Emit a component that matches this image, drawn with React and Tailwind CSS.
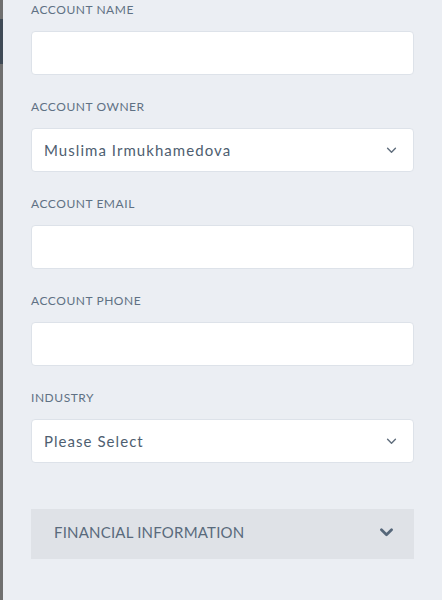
import React from "react";

const Chevron = ({ className, strokeWidth = 1.6 }) => (
  <svg viewBox="0 0 12 8" className={className} fill="none" stroke="currentColor" strokeWidth={strokeWidth} strokeLinecap="round" strokeLinejoin="round">
    <path d="M1.5 1.5 L6 6 L10.5 1.5" />
  </svg>
);

const Label = ({ children }) => (
  <div className="h-[20px] leading-[20px] text-[12px] text-[#5f7184] uppercase tracking-[0.55px]">{children}</div>
);

const Input = () => (
  <div className="mt-[11px] h-[44px] rounded-[4px] bg-white border border-[#dde2e9]" />
);

const Select = ({ value }) => (
  <div className="mt-[11px] h-[44px] rounded-[4px] bg-white border border-[#dde2e9] flex items-center justify-between pl-[12px] pr-[16px]">
    <span className="text-[15px] text-[#4e5e70] tracking-[1.05px]">{value}</span>
    <Chevron className="w-[11px] h-[7px] text-[#5f6d7c]" />
  </div>
);

export default function App() {
  return (
    <div className="w-[442px] h-[600px] flex overflow-hidden" style={{ fontFamily: "Lato, 'Open Sans', sans-serif" }}>
      <div className="w-[3px] h-full bg-[#6f6f6f] flex flex-col">
        <div className="h-[19px]" />
        <div className="h-[45px] bg-[#3f4a56]" />
      </div>
      <div className="flex-1 bg-[#ebeef3] pl-[28px] pr-[28px]">
        <div className="mb-[22px]"><Label>Account Name</Label><Input /></div>
        <div className="mb-[22px]"><Label>Account Owner</Label><Select value="Muslima Irmukhamedova" /></div>
        <div className="mb-[22px]"><Label>Account Email</Label><Input /></div>
        <div className="mb-[22px]"><Label>Account Phone</Label><Input /></div>
        <div className="mb-[22px]"><Label>Industry</Label><Select value="Please Select" /></div>
        <div className="mt-[46px] h-[50px] bg-[#dfe2e7] flex items-center justify-between pl-[23px] pr-[20px] pb-[3px]">
          <span className="text-[15px] text-[#596a7c] uppercase tracking-[0.2px]">Financial Information</span>
          <Chevron className="w-[15px] h-[9px] text-[#56677a]" strokeWidth={2.4} />
        </div>
      </div>
    </div>
  );
}
